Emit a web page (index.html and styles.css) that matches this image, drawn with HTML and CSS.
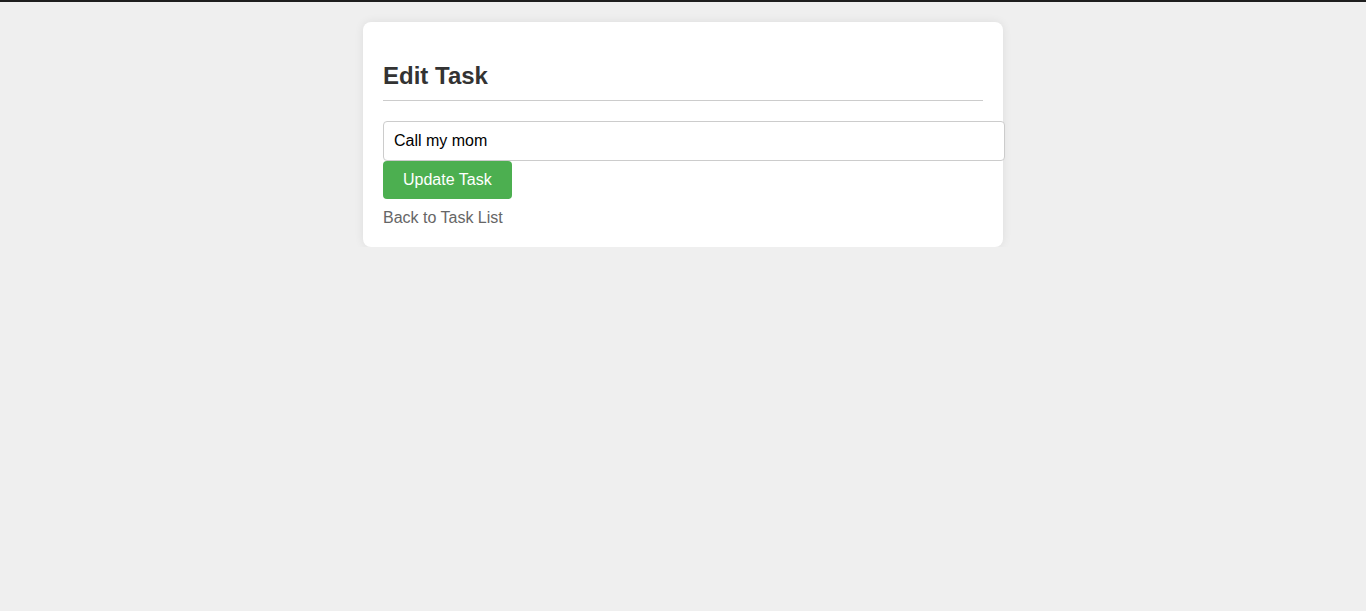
FILE: index.html
```html
<!DOCTYPE html>
<html lang="en">
<head>
<meta charset="utf-8">
<title>Edit Task</title>
<link rel="stylesheet" href="styles.css">
</head>
<body>
<div class="topline"></div>
<div class="container">
  <h2 class="title">Edit Task</h2>
  <form class="form">
    <input class="task-input" type="text" value="Call my mom">
    <button class="btn" type="button">Update Task</button>
  </form>
  <a class="back" href="#">Back to Task List</a>
</div>
</body>
</html>
```
FILE: styles.css
```css
html, body {
  margin: 0;
  padding: 0;
}
body {
  background: #efefef;
  font-family: "Liberation Sans", Arial, sans-serif;
  color: #333;
}
.topline {
  height: 2px;
  background: #1e1e1e;
}
.container {
  width: 600px;
  margin: 20px auto 0;
  padding: 20px;
  background: #fff;
  border-radius: 8px;
  box-shadow: 0 0 10px rgba(0, 0, 0, 0.08);
}
.title {
  font-size: 24px;
  font-weight: bold;
  color: #333;
  margin: 20px 0 20px;
  padding-bottom: 10px;
  border-bottom: 1px solid #ccc;
  line-height: 28px;
}
.form {
  margin: 0;
}
.task-input {
  display: block;
  width: 100%;
  box-sizing: content-box;
  padding: 10px;
  border: 1px solid #ccc;
  border-radius: 4px;
  font-family: "Liberation Sans", Arial, sans-serif;
  font-size: 16px;
  line-height: 18px;
  height: 18px;
  color: #000;
  margin: 0;
}
.btn {
  display: inline-block;
  background: #4caf50;
  color: #fff;
  border: none;
  border-radius: 4px;
  padding: 10px 20px;
  font-family: "Liberation Sans", Arial, sans-serif;
  font-size: 16px;
  line-height: 18px;
  margin: 0;
  cursor: pointer;
}
.back {
  display: inline-block;
  margin-top: 10px;
  color: #666;
  text-decoration: none;
  font-size: 16px;
  line-height: 18px;
}
```
